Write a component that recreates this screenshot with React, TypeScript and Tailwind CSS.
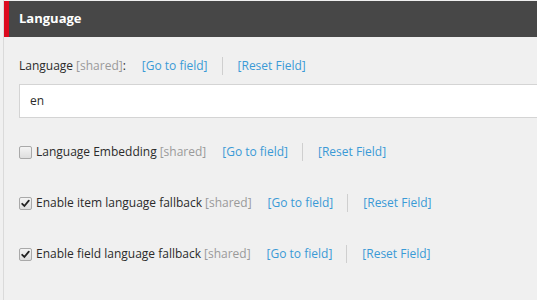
import React from "react";

type Field = { label: string; checked: boolean; gap: string };

const checkFields: Field[] = [
  { label: "Language Embedding", checked: false, gap: "mt-[25px]" },
  { label: "Enable item language fallback", checked: true, gap: "mt-[33px]" },
  { label: "Enable field language fallback", checked: true, gap: "mt-[33px]" },
];

function Links() {
  return (
    <>
      <a className="ml-[16px] text-[#3a9ad6] cursor-pointer">[Go to field]</a>
      <span className="ml-[14px] mr-[15px] h-[18px] w-px bg-[#cfcfcf]" />
      <a className="text-[#3a9ad6] cursor-pointer">[Reset Field]</a>
    </>
  );
}

function Box({ checked }: { checked: boolean }) {
  return (
    <span className="mr-[4px] flex h-[13px] w-[13px] items-center justify-center rounded-[2px] border border-[#a9a9a9] bg-gradient-to-b from-[#f4f4f4] to-[#dedede]">
      {checked && (
        <svg width="9" height="9" viewBox="0 0 9 9">
          <path d="M1.2 4.8 L3.4 7 L7.8 1.6" fill="none" stroke="#222" strokeWidth="1.8" strokeLinecap="round" />
        </svg>
      )}
    </span>
  );
}

export default function App() {
  return (
    <div className="h-[300px] w-[537px] overflow-hidden bg-[#f0f0f0] pl-[3px] font-['Open_Sans',sans-serif] text-[12px] text-[#2b2b2b]">
      <div className="h-full border-l border-[#dadada] pt-px">
        <div className="flex h-[36px] items-center border-l-[5px] border-[#dc0a1e] bg-[#474747] pl-[10px] text-[13px] font-bold text-white">
          Language
        </div>
        <div className="pl-[15px]">
          <div className="mt-[20px] flex h-[18px] items-center">
            <span>Language</span>
            <span className="ml-[3px] text-[#9a9a9a]">[shared]</span>
            <span>:</span>
            <Links />
          </div>
          <div className="mt-[9px] flex h-[34px] w-[540px] items-center border border-[#d4d4d4] bg-white px-[10px]">
            en
          </div>
          {checkFields.map((f) => (
            <div key={f.label} className={`${f.gap} flex h-[18px] items-center`}>
              <Box checked={f.checked} />
              <span>{f.label}</span>
              <span className="ml-[3px] text-[#9a9a9a]">[shared]</span>
              <Links />
            </div>
          ))}
        </div>
      </div>
    </div>
  );
}
